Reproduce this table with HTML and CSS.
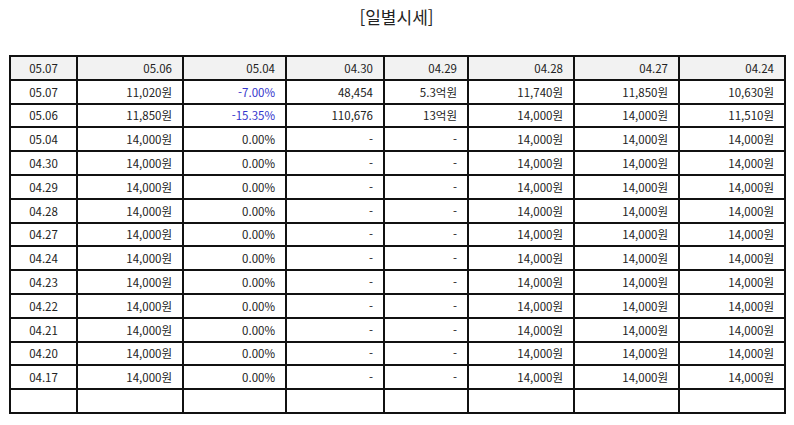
FILE: index.html
```html
<!DOCTYPE html>
<html lang="ko">
<head>
<meta charset="utf-8">
<title>일별시세</title>
<link rel="stylesheet" href="styles.css">
</head>
<body>
<h2 class="title">[일별시세]</h2>
<table class="grid">
  <colgroup>
    <col class="c1"><col class="c2"><col class="c3"><col class="c4"><col class="c5"><col class="c6"><col class="c7"><col class="c8">
  </colgroup>
  <thead>
    <tr><th class="date">05.07</th><th>05.06</th><th>05.04</th><th>04.30</th><th>04.29</th><th>04.28</th><th>04.27</th><th>04.24</th></tr>
  </thead>
  <tbody>
    <tr><td class="date">05.07</td><td>11,020원</td><td class="blue">-7.00%</td><td>48,454</td><td>5.3억원</td><td>11,740원</td><td>11,850원</td><td>10,630원</td></tr>
    <tr><td class="date">05.06</td><td>11,850원</td><td class="blue">-15.35%</td><td>110,676</td><td>13억원</td><td>14,000원</td><td>14,000원</td><td>11,510원</td></tr>
    <tr><td class="date">05.04</td><td>14,000원</td><td>0.00%</td><td>-</td><td>-</td><td>14,000원</td><td>14,000원</td><td>14,000원</td></tr>
    <tr><td class="date">04.30</td><td>14,000원</td><td>0.00%</td><td>-</td><td>-</td><td>14,000원</td><td>14,000원</td><td>14,000원</td></tr>
    <tr><td class="date">04.29</td><td>14,000원</td><td>0.00%</td><td>-</td><td>-</td><td>14,000원</td><td>14,000원</td><td>14,000원</td></tr>
    <tr><td class="date">04.28</td><td>14,000원</td><td>0.00%</td><td>-</td><td>-</td><td>14,000원</td><td>14,000원</td><td>14,000원</td></tr>
    <tr><td class="date">04.27</td><td>14,000원</td><td>0.00%</td><td>-</td><td>-</td><td>14,000원</td><td>14,000원</td><td>14,000원</td></tr>
    <tr><td class="date">04.24</td><td>14,000원</td><td>0.00%</td><td>-</td><td>-</td><td>14,000원</td><td>14,000원</td><td>14,000원</td></tr>
    <tr><td class="date">04.23</td><td>14,000원</td><td>0.00%</td><td>-</td><td>-</td><td>14,000원</td><td>14,000원</td><td>14,000원</td></tr>
    <tr><td class="date">04.22</td><td>14,000원</td><td>0.00%</td><td>-</td><td>-</td><td>14,000원</td><td>14,000원</td><td>14,000원</td></tr>
    <tr><td class="date">04.21</td><td>14,000원</td><td>0.00%</td><td>-</td><td>-</td><td>14,000원</td><td>14,000원</td><td>14,000원</td></tr>
    <tr><td class="date">04.20</td><td>14,000원</td><td>0.00%</td><td>-</td><td>-</td><td>14,000원</td><td>14,000원</td><td>14,000원</td></tr>
    <tr><td class="date">04.17</td><td>14,000원</td><td>0.00%</td><td>-</td><td>-</td><td>14,000원</td><td>14,000원</td><td>14,000원</td></tr>
    <tr><td class="date"></td><td></td><td></td><td></td><td></td><td></td><td></td><td></td></tr>
  </tbody>
</table>
</body>
</html>
```
FILE: styles.css
```css
html, body {
  background: #fff;
}
body {
  margin: 0;
  padding: 0 10px 0 9px;
  font-family: "Noto Sans CJK KR", "Noto Sans", sans-serif;
  color: #222;
}
.title {
  margin: 0;
  height: 55px;
  padding-top: 5px;
  box-sizing: border-box;
  font-size: 17px;
  font-weight: normal;
  line-height: 24px;
  text-align: center;
  color: #222;
}
.grid {
  width: 775px;
  border-collapse: collapse;
  table-layout: fixed;
  font-size: 11.5px;
}
.c1 { width: 67px; }
.c2 { width: 106px; }
.c3 { width: 103px; }
.c4 { width: 98px; }
.c5 { width: 84px; }
.c6 { width: 106px; }
.c7 { width: 105px; }
.c8 { width: 106px; }
.grid tr {
  height: 23.8px;
}
.grid th,
.grid td {
  border: 2px solid #111;
  padding: 0 10px 0 4px;
  text-align: right;
  font-weight: normal;
  line-height: 14px;
  white-space: nowrap;
  color: #222;
}
.grid th {
  background: #f2f2f2;
}
.grid .date {
  text-align: center;
  padding: 0;
}
.grid .blue {
  color: #3535cc;
}
```
